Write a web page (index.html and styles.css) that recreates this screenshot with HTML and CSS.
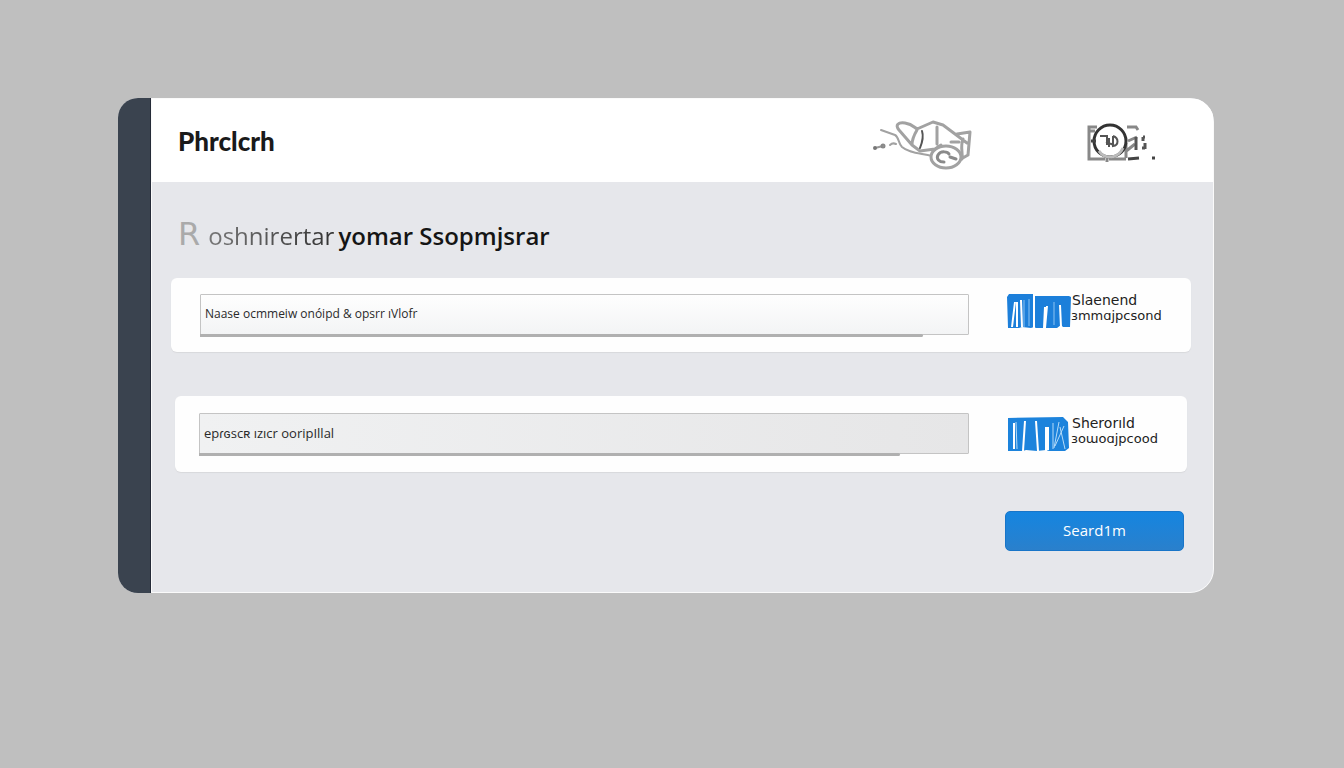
FILE: index.html
```
<!DOCTYPE html>
<html lang="en">
<head>
    <meta charset="UTF-8">
    <meta name="viewport" content="width=device-width, initial-scale=1.0">
    <title>Phrclcrh</title>
    <link rel="stylesheet" href="styles.css">
</head>
<body>
    <div class="window">
        <aside class="sidebar"></aside>

        <div class="panel">
            <!-- Top bar -->
            <header class="topbar">
                <div class="brand">Phrclcrh</div>
                <svg class="sketch" width="104" height="54" viewBox="0 0 104 54" fill="none" stroke="#a2a2a2" stroke-width="3" stroke-linecap="round" stroke-linejoin="round">
                    <path d="M10 10l14 5c4 2 3 8 7 12 7 6 17 6 30 9M19 25c2-2 4-2 6-1" stroke-width="2"/>
                    <path d="M41 25L28 10c-4-5-1-8 6-7 7 1 9 4 12 6L62 2l10 3 24 18M46 10c-3 5-5 10-5 15l8 6 15-2 6-4M66 7v17M80 22h8M86 14l13-2-2 23-7 4M92 19c-3 8 0 13-1 20"/>
                    <path d="M51 11c2 6 0 12-2 17" stroke="#555" stroke-width="2"/>
                    <ellipse cx="75" cy="37" rx="15" ry="11" fill="#fff"/>
                    <path d="M73 42c-5 0-8-3-6-7 3-5 10-3 11-1M79 37l6 2" stroke="#8a8a8a"/>
                    <path d="M4 28l8-2" stroke="#999" stroke-width="2"/>
                    <circle cx="4" cy="28" r="1" stroke="#777" stroke-width="2"/>
                    <circle cx="12" cy="26" r="1" stroke="#888" stroke-width="3"/>
                </svg>
                <svg class="camera" width="70" height="40" viewBox="0 0 70 40" fill="none" stroke="#888" stroke-width="3">
                    <path d="M10 4H2v32h16M8 8H3M22 36h17M40 4h9l2 3M20 30v9M50 14l-9 4M38 29l10-8M39 20v15"/>
                    <path d="M41 36l11-1" stroke="#444"/>
                    <path d="M49 14v13M56 14h2M56 14v4M58 20v6M55 25h3" stroke="#555" stroke-width="3"/>
                    <circle cx="23" cy="18" r="16" fill="#fff" stroke="#333"/>
                    <path d="M12 28c6 9 19 8 24-3" stroke="#bbb"/>
                    <path d="M13 13l7 0 0 9M22 15v9M26 13v10c6-1 6-8 0-10M19 19l8 3" stroke="#555" stroke-width="2"/>
                    <path d="M65 35h3M4 18h5" stroke="#444" stroke-width="3"/>
                </svg>
            </header>

            <main class="content">
                <h1><span class="initial">R</span><span class="fade">oshnirertar</span><span class="strong">yomar Ssopmjsrar</span></h1>

                <form>
                    <!-- Field rows -->
                    <div class="row">
                        <div class="field">
                            <input type="text" id="first" value="Naase ocmmeiw onóipd &amp; opsrr ıVlofr">
                        </div>
                        <label for="first">
                            <svg width="64" height="34" viewBox="0 0 64 34">
                                <path fill="#1c7fda" d="M2 0h24v2h36l2 1-1 30h-7l-2-2-4 3H29l-2-1-3 1-9-1-3 1H1L0 3z"/>
                                <path d="M8 8L5 33M10 8v25M14 6l1 27M27 1v33M38 13l-1 21M40 12l-2 22M53 11l1 22" fill="none" stroke="#fff" stroke-width="2"/>
                                <path d="M17 6v27M22 5v27M47 8v23" stroke="#8cc4f2" stroke-width="1"/>
                            </svg>
                            <span class="caption"><span class="name">Slaenend</span><span>ɜmmɑjpcsond</span></span>
                        </label>
                    </div>

                    <div class="row row-muted">
                        <div class="field">
                            <input type="text" id="second" value="epɾɢscʀ ızıcr ooripIllal">
                        </div>
                        <label for="second">
                            <svg width="64" height="34" viewBox="0 0 64 34">
                                <path fill="#1c83dc" d="M1 1l55-1 5 5 1 26-4 3H42l-3-1-9 1-11-1-3 1H1z"/>
                                <path d="M7 6v26M18 4l-2 30M29 4l2 30M39 10v24M41 10v23" fill="none" stroke="#fff" stroke-width="2"/>
                                <path d="M9 5l1 27M46 6v26M52 5l-5 26M53 10l5 22M57 9l-9 20" fill="none" stroke="#b5dbf8" stroke-width="1"/>
                            </svg>
                            <span class="caption"><span class="name">Sherorıld</span><span>ɜoɯoɑjpcood</span></span>
                        </label>
                    </div>

                    <div class="actions">
                        <button type="submit">Seard1m</button>
                    </div>
                </form>
            </main>
        </div>
    </div>
</body>
</html>
```
FILE: styles.css
```
* {
    box-sizing: border-box;
}

body {
    margin: 0;
    min-height: 100vh;
    padding: 98px 130px 40px 118px;
    font-family: "Open Sans", "DejaVu Sans", sans-serif;
    background: #bfbfbf;
    color: #222;
}

.window {
    display: flex;
    border-radius: 20px 24px 24px 20px;
    overflow: hidden;
    background: #e6e7eb;
}

.sidebar {
    width: 33px;
    flex-shrink: 0;
    background: #3a434f;
    border-right: 1px solid #252b38;
}

.panel {
    flex: 1;
    min-width: 0;
    border: 1px solid #fafafa;
    border-radius: 0 24px 24px 0;
}

/* Top bar */
.topbar {
    display: flex;
    align-items: center;
    height: 83px;
    padding: 4px 56px 0 26px;
    background: #fff;
}

.brand {
    flex: 1;
    padding-bottom: 4px;
    font-family: Lato, sans-serif;
    font-size: 26px;
    font-weight: 900;
    color: #1a1a1a;
}

.sketch {
    margin: 8px 112px 0 0;
}

/* Content */
.content {
    padding: 38px 22px 41px 19px;
}

h1 {
    margin: 0 0 26px;
    padding-left: 7px;
    font-size: 24px;
    font-weight: 400;
    line-height: 32px;
    white-space: nowrap;
}

.initial {
    margin-right: 8px;
    font-family: "DejaVu Sans", sans-serif;
    font-size: 32px;
    line-height: 24px;
    color: #aaa;
}

.fade {
    margin-right: 4px;
    background: linear-gradient(90deg, #777, #333);
    -webkit-background-clip: text;
    background-clip: text;
    color: transparent;
}

.strong {
    font-weight: 600;
    color: #151515;
}

.row {
    display: flex;
    align-items: flex-start;
    gap: 38px;
    margin-bottom: 44px;
    padding: 16px 24px 17px 29px;
    background: #fefefe;
    border-radius: 6px;
    box-shadow: 0 1px 1px #d8d9dc;
}

.row-muted {
    margin: 0 4px 39px;
    padding: 17px 20px 18px 24px;
}

.field {
    position: relative;
    flex: 1;
}

.field::after {
    content: '';
    position: absolute;
    left: 0;
    bottom: -2px;
    width: 94%;
    height: 3px;
    background: #b0b0b0;
    border-radius: 0 2px 2px 0;
}

.row-muted .field::after {
    width: 91%;
}

input {
    display: block;
    width: 100%;
    height: 41px;
    padding: 0 4px 2px;
    border: 1px solid #c4c4c4;
    border-radius: 1px;
    background: linear-gradient(#fefefe, #f3f4f5);
    color: #2a2a2a;
    font-family: "Open Sans", sans-serif;
    font-size: 12px;
}

.row-muted input {
    background: linear-gradient(90deg, #f0f1f2, #e6e6e7);
    font-size: 13px;
}

label {
    display: flex;
    width: 160px;
}

.row-muted label {
    padding-top: 4px;
}

.caption {
    display: flex;
    flex-direction: column;
    margin-top: -2px;
    font-family: "DejaVu Sans", sans-serif;
    font-size: 13px;
    line-height: 16px;
}

.name {
    padding-left: 1px;
    font-size: 14px;
}

/* Submit */
.actions {
    display: flex;
    justify-content: flex-end;
    padding-right: 7px;
}

button {
    width: 179px;
    height: 40px;
    padding-bottom: 3px;
    border: 1px solid #1875c8;
    border-radius: 5px;
    background: linear-gradient(#1585e0, #2a80cc);
    color: #fff;
    font-family: "Open Sans", sans-serif;
    font-size: 15px;
    cursor: pointer;
}
```
